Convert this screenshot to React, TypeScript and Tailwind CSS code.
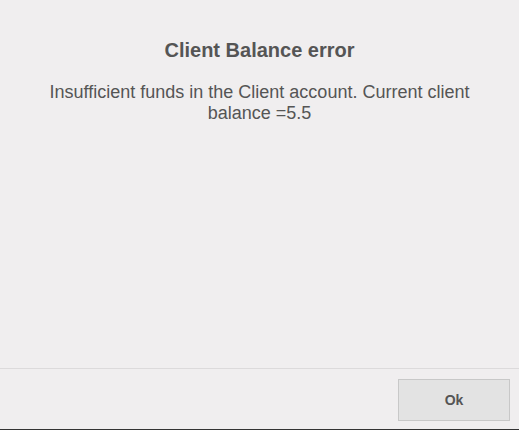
export default function App() {
  return (
    <div className="flex h-[430px] w-[519px] flex-col bg-[#f0eeef] font-['Liberation_Sans',Arial,sans-serif] text-[#555]">
      <div className="flex flex-1 flex-col items-center px-[40px] pt-[38px] text-center">
        <h2 className="text-[20px] font-bold leading-[24px]">Client Balance error</h2>
        <p className="mt-[20px] text-[18px] leading-[21px]">
          Insufficient funds in the Client account. Current client balance =5.5
        </p>
      </div>
      <div className="flex h-[61px] justify-end border-t border-[#dcdadb] pr-[9px] pt-[10px]">
        <button
          type="button"
          className="h-[42px] w-[112px] border border-[#c8c8c8] bg-[#e3e3e3] text-[14px] font-bold text-[#555]"
        >
          Ok
        </button>
      </div>
      <div className="h-px bg-[#333]" />
    </div>
  );
}
